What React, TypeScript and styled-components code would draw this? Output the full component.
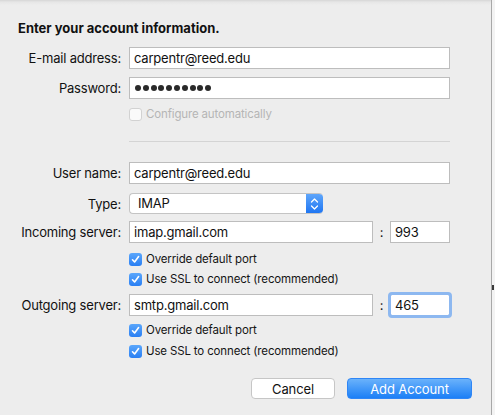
import styled, { createGlobalStyle } from 'styled-components'

const GlobalStyle = createGlobalStyle`
  html, body {
    margin: 0;
    padding: 0;
    background: #ececec;
  }
  body {
    font-family: Inter, 'Liberation Sans', sans-serif;
    font-size: 13px;
    letter-spacing: -0.2px;
    color: #1a1a1a;
  }
`

const Window = styled.div`
  display: flex;
  width: 495px;
  height: 415px;
  overflow: hidden;
`

const Sheet = styled.div`
  width: 492px;
  height: 415px;
  box-sizing: border-box;
  border-right: 1px solid #a8a8a8;
  background: linear-gradient(#d6d6d6 0px, #e6e6e6 2px, #ededed 5px, #ededed 100%);
  display: flex;
  flex-direction: column;
`

const Gutter = styled.div`
  flex: 1;
  background: #f3f3f3;
  display: flex;
  flex-direction: column;
`

const GutterMark = styled.div`
  margin-top: 285px;
  width: 2px;
  height: 5px;
  background: #3a3a3a;
`

const Title = styled.h1`
  margin: 20px 0 0 18px;
  font-size: 13px;
  line-height: 16px;
  font-weight: 700;
  letter-spacing: 0;
  color: #111;
`

const Row = styled.div<{ $mt: number }>`
  display: flex;
  align-items: center;
  margin-top: ${(p) => p.$mt}px;
`

const Label = styled.label`
  width: 121px;
  margin-right: 8px;
  text-align: right;
  white-space: nowrap;
  color: #111;
`

const Field = styled.div<{ $w: number; $focus?: boolean }>`
  box-sizing: border-box;
  width: ${(p) => p.$w}px;
  height: 22px;
  background: #fff;
  border: 1px solid #bdbdbd;
  padding: 0 4px;
  display: flex;
  align-items: center;
  white-space: nowrap;
  overflow: hidden;
  color: #111;
  ${(p) =>
    p.$focus &&
    `
    border-color: #8fb6ea;
    outline: 3px solid #8db8f0;
    outline-offset: -1px;
    border-radius: 2px;
  `}
`

const Dot = styled.span`
  width: 6px;
  height: 6px;
  border-radius: 50%;
  background: #2a2a2a;
  margin-left: 1px;
  margin-right: 0.8px;
`

const Colon = styled.span`
  width: 17px;
  text-align: center;
  color: #111;
`

const Select = styled.div`
  box-sizing: border-box;
  width: 194px;
  height: 21px;
  display: flex;
  border-radius: 4px;
  border: 1px solid #c4c4c4;
  border-right: none;
  background: #fff;
  overflow: hidden;
`

const SelectText = styled.span`
  flex: 1;
  padding-left: 8px;
  line-height: 19px;
  color: #111;
`

const Stepper = styled.div`
  width: 17px;
  margin: -1px 0;
  background: linear-gradient(#62a8fb, #1c74f2);
  border-radius: 0 4px 4px 0;
  display: flex;
  align-items: center;
  justify-content: center;
`

const CheckLine = styled(Row)`
  height: 14px;
`

const Check = styled.div<{ $off?: boolean }>`
  box-sizing: border-box;
  width: 13px;
  height: 13px;
  border-radius: 3px;
  display: flex;
  align-items: center;
  justify-content: center;
  margin-left: 129px;
  margin-right: 4px;
  ${(p) =>
    p.$off
      ? `background: #fafafa; border: 1px solid #d2d2d2;`
      : `background: linear-gradient(#5aa6fb, #2a7ff3);`}
`

const CheckText = styled.span<{ $off?: boolean }>`
  font-size: 11.5px;
  line-height: 14px;
  letter-spacing: -0.15px;
  color: ${(p) => (p.$off ? '#b5b5b5' : '#151515')};
  white-space: nowrap;
`

const Separator = styled.hr`
  margin: 20px 0 0 129px;
  width: 321px;
  border: none;
  border-top: 1px solid #d4d4d4;
  height: 0;
`

const Buttons = styled.div`
  display: flex;
  justify-content: flex-end;
  gap: 12px;
  margin-top: 20px;
  padding-right: 19px;
`

const Button = styled.button<{ $primary?: boolean; $w: number }>`
  box-sizing: border-box;
  width: ${(p) => p.$w}px;
  height: 21px;
  border-radius: 4px;
  font-family: inherit;
  font-size: 13px;
  letter-spacing: -0.1px;
  padding: 0;
  ${(p) =>
    p.$primary
      ? `
    color: #fff;
    border: 1px solid #2f86f6;
    background: linear-gradient(#6ab2fb, #1c7ff6);
  `
      : `
    color: #111;
    border: 1px solid #c6c6c6;
    background: #fff;
  `}
`

function Tick() {
  return (
    <svg width="9" height="9" viewBox="0 0 9 9">
      <path d="M1.5 4.8 L3.6 7 L7.6 1.6" fill="none" stroke="#fff" strokeWidth="1.6" strokeLinecap="round" strokeLinejoin="round" />
    </svg>
  )
}

function Arrows() {
  return (
    <svg width="9" height="14" viewBox="0 0 9 14">
      <path d="M1.5 5 L4.5 2 L7.5 5 M1.5 9 L4.5 12 L7.5 9" fill="none" stroke="#fff" strokeWidth="1.3" strokeLinecap="round" strokeLinejoin="round" />
    </svg>
  )
}

function CheckRow({ mt, text, off }: { mt: number; text: string; off?: boolean }) {
  return (
    <CheckLine $mt={mt}>
      <Check $off={off}>{!off && <Tick />}</Check>
      <CheckText $off={off}>{text}</CheckText>
    </CheckLine>
  )
}

export default function App() {
  return (
    <Window>
      <GlobalStyle />
      <Sheet>
        <Title>Enter your account information.</Title>
        <Row $mt={11}>
          <Label>E-mail address:</Label>
          <Field $w={321}>carpentr@reed.edu</Field>
        </Row>
        <Row $mt={8}>
          <Label>Password:</Label>
          <Field $w={321} aria-label="password">
            {Array.from({ length: 10 }, (_, i) => (
              <Dot key={i} />
            ))}
          </Field>
        </Row>
        <CheckRow mt={8} text="Configure automatically" off />
        <Separator />
        <Row $mt={20}>
          <Label>User name:</Label>
          <Field $w={321}>carpentr@reed.edu</Field>
        </Row>
        <Row $mt={9}>
          <Label>Type:</Label>
          <Select>
            <SelectText>IMAP</SelectText>
            <Stepper>
              <Arrows />
            </Stepper>
          </Select>
        </Row>
        <Row $mt={7}>
          <Label>Incoming server:</Label>
          <Field $w={244}>imap.gmail.com</Field>
          <Colon>:</Colon>
          <Field $w={60}>993</Field>
        </Row>
        <CheckRow mt={9} text="Override default port" />
        <CheckRow mt={6} text="Use SSL to connect (recommended)" />
        <Row $mt={8}>
          <Label>Outgoing server:</Label>
          <Field $w={244}>smtp.gmail.com</Field>
          <Colon>:</Colon>
          <Field $w={60} $focus>465</Field>
        </Row>
        <CheckRow mt={7} text="Override default port" />
        <CheckRow mt={7} text="Use SSL to connect (recommended)" />
        <Buttons>
          <Button $w={84}>Cancel</Button>
          <Button $w={125} $primary>Add Account</Button>
        </Buttons>
      </Sheet>
      <Gutter>
        <GutterMark />
      </Gutter>
    </Window>
  )
}
